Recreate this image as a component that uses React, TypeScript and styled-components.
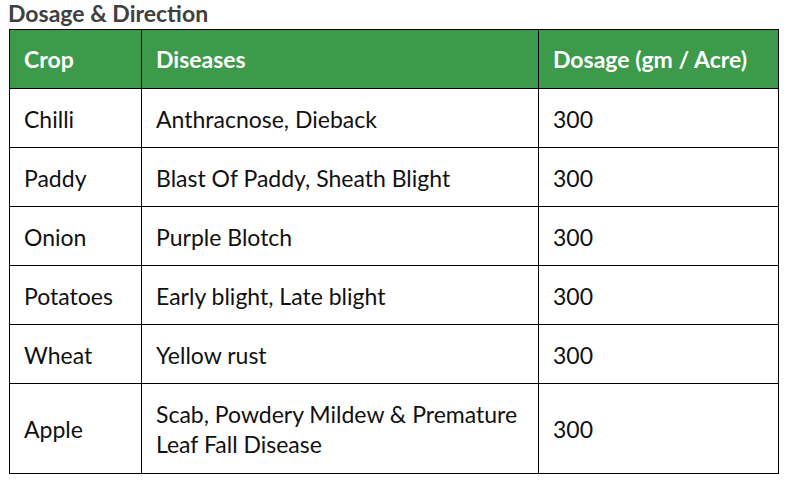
import React from "react";
import styled, { createGlobalStyle } from "styled-components";

const Global = createGlobalStyle`
  html, body { margin: 0; padding: 0; background: #ffffff; }
  body { font-family: Lato, "Open Sans", sans-serif; }
`;

const Page = styled.div`
  padding: 0 0 0 9px;
  width: 769px;
`;

const Title = styled.h2`
  margin: 0 0 0 -1px;
  height: 29px;
  line-height: 27px;
  font-size: 23px;
  font-weight: 700;
  color: #404040;
`;

const Table = styled.table`
  border-collapse: collapse;
  width: 769px;
  table-layout: fixed;
`;

const HeadCell = styled.th<{ $w: number }>`
  box-sizing: border-box;
  width: ${(p) => p.$w}px;
  background: #3c9a4a;
  color: #ffffff;
  font-weight: 700;
  font-size: 23px;
  text-align: left;
  padding: 0 14px;
  height: 59px;
  border: 1px solid #000;
`;

const Cell = styled.td<{ $tall?: boolean }>`
  box-sizing: border-box;
  color: #111111;
  font-size: 23px;
  line-height: 30px;
  text-align: left;
  vertical-align: middle;
  padding: 1px 14px 0;
  height: ${(p) => (p.$tall ? 90 : 59)}px;
  border: 1px solid #000;
`;

const rows: [string, React.ReactNode, string, boolean?][] = [
  ["Chilli", "Anthracnose, Dieback", "300"],
  ["Paddy", "Blast Of Paddy, Sheath Blight", "300"],
  ["Onion", "Purple Blotch", "300"],
  ["Potatoes", "Early blight, Late blight", "300"],
  ["Wheat", "Yellow rust", "300"],
  [
    "Apple",
    <>
      Scab, Powdery Mildew &amp; Premature
      <br />
      Leaf Fall Disease
    </>,
    "300",
    true,
  ],
];

export default function App() {
  return (
    <Page>
      <Global />
      <Title>Dosage &amp; Direction</Title>
      <Table>
        <thead>
          <tr>
            <HeadCell $w={132}>Crop</HeadCell>
            <HeadCell $w={397}>Diseases</HeadCell>
            <HeadCell $w={240}>Dosage (gm / Acre)</HeadCell>
          </tr>
        </thead>
        <tbody>
          {rows.map(([crop, dis, dose, tall]) => (
            <tr key={crop}>
              <Cell $tall={tall}>{crop}</Cell>
              <Cell $tall={tall}>{dis}</Cell>
              <Cell $tall={tall}>{dose}</Cell>
            </tr>
          ))}
        </tbody>
      </Table>
    </Page>
  );
}
